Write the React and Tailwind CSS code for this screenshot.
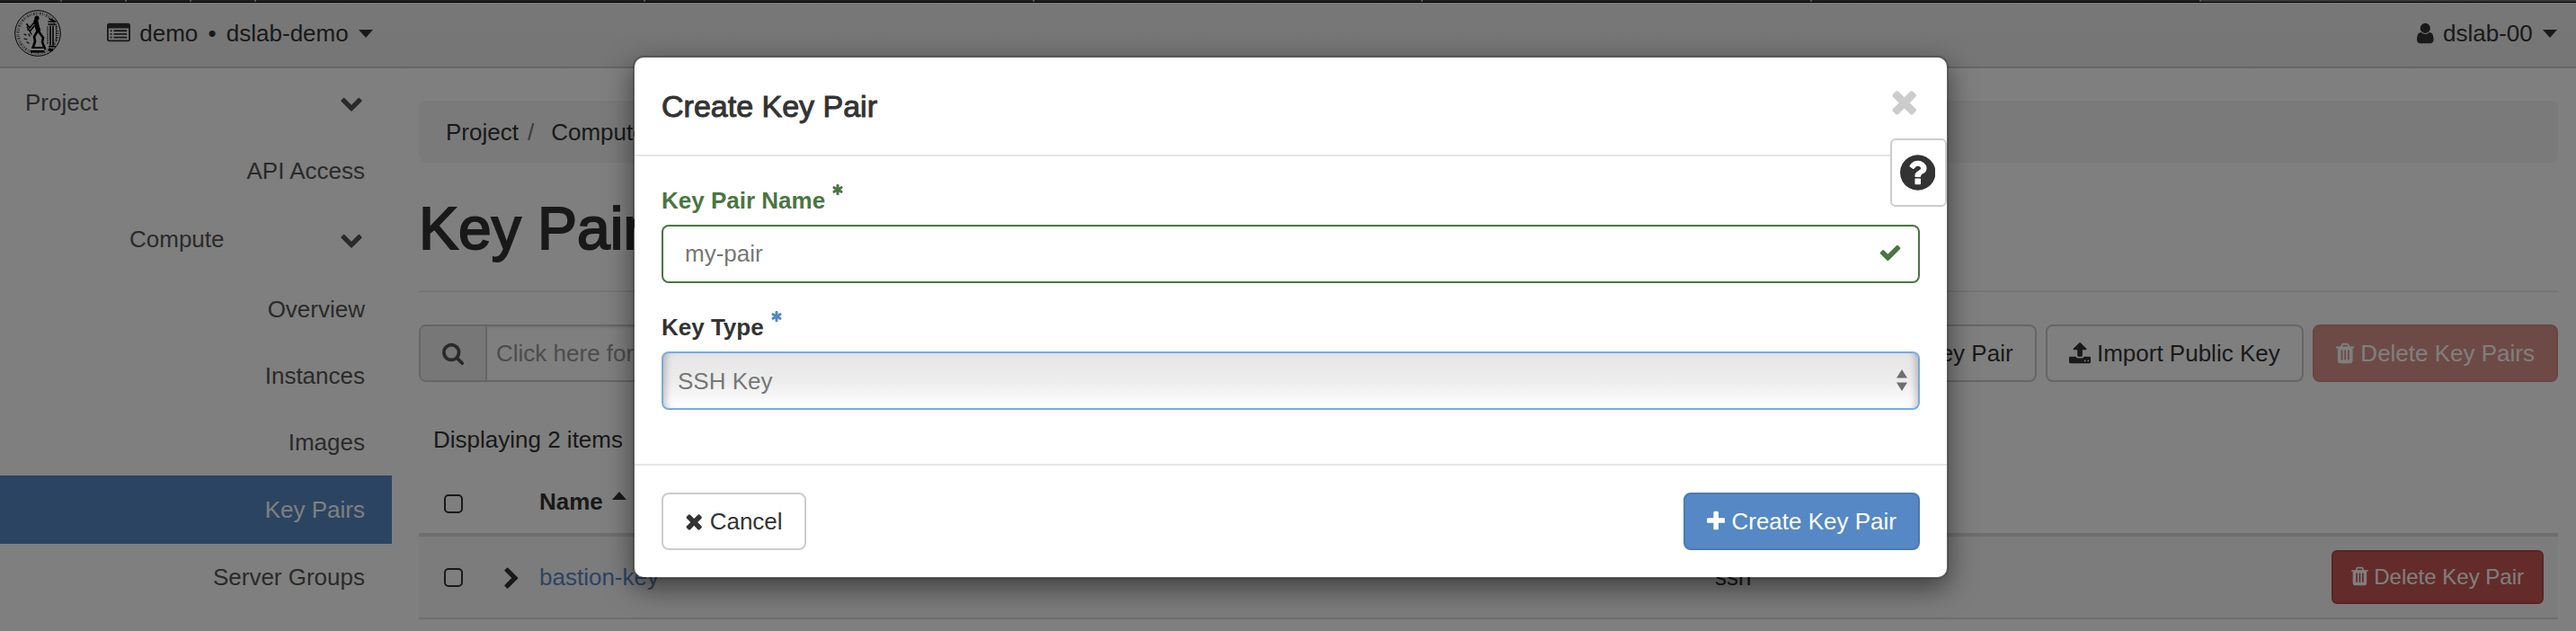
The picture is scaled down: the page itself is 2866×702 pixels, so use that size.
const PATHS = {
  times: [192, 1408, "M1490 1322q0 40-28 68l-136 136q-28 28-68 28t-68-28l-294-294-294 294q-28 28-68 28t-68-28l-136-136q-28-28-28-68t28-68l294-294-294-294q-28-28-28-68t28-68l136-136q28-28 68-28t68 28l294 294 294-294q28-28 68-28t68 28l136 136q28 28 28 68t-28 68l-294 294 294 294q28 28 28 68z"],
  plus: [192, 1408, "M1600 736v192q0 40-28 68t-68 28h-416v416q0 40-28 68t-68 28h-192q-40 0-68-28t-28-68v-416h-416q-40 0-68-28t-28-68v-192q0-40 28-68t68-28h416v-416q0-40 28-68t68-28h192q40 0 68 28t28 68v416h416q40 0 68 28t28 68z"],
  check: [0, 1792, "M1671 566q0 40-28 68l-724 724-136 136q-28 28-68 28t-68-28l-136-136-362-362q-28-28-28-68t28-68l136-136q28-28 68-28t68 28l294 295 656-657q28-28 68-28t68 28l136 136q28 28 28 68z"],
  chevronDown: [0, 1792, "M1683 808l-742 741q-19 19-45 19t-45-19l-742-741q-19-19-19-45.500t19-45.500l166-165q19-19 45-19t45 19l531 531 531-531q19-19 45-19t45 19l166 165q19 19 19 45.500t-19 45.500z"],
  chevronRight: [256, 1280, "M1363 877l-742 742q-19 19-45 19t-45-19l-166-166q-19-19-19-45t19-45l531-531-531-531q-19-19-19-45t19-45l166-166q19-19 45-19t45 19l742 742q19 19 19 45t-19 45z"],
  search: [64, 1664, "M1216 832q0-185-131.500-316.500t-316.500-131.500-316.500 131.500-131.500 316.500 131.500 316.500 316.500 131.500 316.500-131.500 131.500-316.500zm512 832q0 52-38 90t-90 38q-54 0-90-38l-343-342q-179 124-399 124-143 0-273.500-55.500t-225-150-150-225-55.500-273.500 55.500-273.500 150-225 225-150 273.500-55.500 273.500 55.500 225 150 150 225 55.500 273.500q0 220-124 399l343 343q37 37 37 90z"],
  user: [256, 1280, "M1536 1399q0 109-62.500 187t-150.500 78h-854q-88 0-150.500-78t-62.500-187q0-85 8.500-160.500t31.500-152 58.500-131 94-89 134.500-34.500q131 128 313 128t313-128q76 0 134.500 34.500t94 89 58.500 131 31.500 152 8.500 160.500zm-256-887q0 159-112.500 271.500t-271.500 112.500-271.500-112.500-112.500-271.500 112.500-271.500 271.500-112.500 271.500 112.500 112.500 271.500z"],
  question: [128, 1536, "M1024 1376v-192q0-14-9-23t-23-9h-192q-14 0-23 9t-9 23v192q0 14 9 23t23 9h192q14 0 23-9t9-23zm256-672q0-88-55.500-163t-138.500-116-170-41q-243 0-371 213-15 24 8 42l132 100q7 6 19 6 16 0 25-12 53-68 86-92 34-24 86-24 48 0 85.500 26t37.500 59q0 38-20 61t-68 45q-63 28-115.500 86.500t-52.500 125.500v36q0 14 9 23t23 9h192q14 0 23-9t9-23q0-19 21.500-49.500t54.500-49.500q32-18 49-28.500t46-35 44.500-48 28-60.500 12.500-81zm384 192q0 209-103 385.500t-279.500 279.500-385.500 103-385.500-103-279.500-279.500-103-385.500 103-385.500 279.500-279.500 385.500-103 385.500 103 279.500 279.500 103 385.500z"],
  upload: [64, 1664, "M1344 1472q0-26-19-45t-45-19-45 19-19 45 19 45 45 19 45-19 19-45zm256 0q0-26-19-45t-45-19-45 19-19 45 19 45 45 19 45-19 19-45zm128-224v320q0 40-28 68t-68 28h-1472q-40 0-68-28t-28-68v-320q0-40 28-68t68-28h427q21 56 70.500 92t110.500 36h256q61 0 110.500-36t70.500-92h427q40 0 68 28t28 68zm-325-648q-17 40-59 40h-256v448q0 26-19 45t-45 19h-256q-26 0-45-19t-19-45v-448h-256q-42 0-59-40-17-39 14-69l448-448q18-19 45-19t45 19l448 448q31 30 14 69z"],
  trash: [192, 1408, "M704 1376v-704q0-14-9-23t-23-9h-64q-14 0-23 9t-9 23v704q0 14 9 23t23 9h64q14 0 23-9t9-23zm256 0v-704q0-14-9-23t-23-9h-64q-14 0-23 9t-9 23v704q0 14 9 23t23 9h64q14 0 23-9t9-23zm256 0v-704q0-14-9-23t-23-9h-64q-14 0-23 9t-9 23v704q0 14 9 23t23 9h64q14 0 23-9t9-23zm-544-992h448l-48-117q-7-9-17-11h-317q-10 2-17 11zm928 32v64q0 14-9 23t-23 9h-96v948q0 83-47 143.500t-113 60.500h-832q-66 0-113-58.500t-47-141.500v-952h-96q-14 0-23-9t-9-23v-64q0-14 9-23t23-9h309l70-167q15-37 54-63t79-26h320q40 0 79 26t54 63l70 167h309q14 0 23 9t9 23z"],
  asterisk: [128, 1536, "M1546 1050q46 26 59.500 77.500t-12.500 97.500l-64 110q-26 46-77.500 59.500t-97.500-12.500l-266-153v307q0 52-38 90t-90 38h-128q-52 0-90-38t-38-90v-307l-266 153q-46 26-97.500 12.500t-77.500-59.500l-64-110q-26-46-12.500-97.500t59.500-77.500l266-154-266-154q-46-26-59.500-77.500t12.500-97.500l64-110q26-46 77.500-59.500t97.500 12.500l266 153v-307q0-52 38-90t90-38h128q52 0 90 38t38 90v307l266-153q46-26 97.500-12.500t77.500 59.500l64 110q26 46 12.500 97.500t-59.500 77.500l-266 154z"],
  listAlt: [0, 1792, "M384 1184v64q0 13-9.500 22.500t-22.500 9.500h-64q-13 0-22.500-9.500t-9.500-22.500v-64q0-13 9.500-22.500t22.500-9.500h64q13 0 22.500 9.500t9.500 22.500zm0-256v64q0 13-9.500 22.500t-22.500 9.500h-64q-13 0-22.500-9.500t-9.500-22.500v-64q0-13 9.500-22.500t22.500-9.500h64q13 0 22.500 9.500t9.500 22.500zm0-256v64q0 13-9.500 22.500t-22.500 9.500h-64q-13 0-22.500-9.500t-9.500-22.500v-64q0-13 9.500-22.500t22.500-9.500h64q13 0 22.500 9.500t9.500 22.500zm1152 512v64q0 13-9.500 22.500t-22.500 9.500h-960q-13 0-22.500-9.500t-9.500-22.500v-64q0-13 9.500-22.500t22.500-9.500h960q13 0 22.500 9.500t9.500 22.500zm0-256v64q0 13-9.500 22.500t-22.500 9.500h-960q-13 0-22.500-9.500t-9.500-22.500v-64q0-13 9.500-22.500t22.500-9.500h960q13 0 22.500 9.500t9.500 22.500zm0-256v64q0 13-9.500 22.500t-22.500 9.500h-960q-13 0-22.500-9.500t-9.500-22.500v-64q0-13 9.500-22.500t22.500-9.500h960q13 0 22.500 9.500t9.500 22.500zm128 704v-832q0-13-9.500-22.500t-22.500-9.500h-1472q-13 0-22.500 9.500t-9.500 22.500v832q0 13 9.500 22.500t22.500 9.500h1472q13 0 22.500-9.500t9.500-22.500zm128-1088v1088q0 66-47 113t-113 47h-1472q-66 0-113-47t-47-113v-1088q0-66 47-113t113-47h1472q66 0 113 47t47 113z"],
};

function Icon({ name, className = "h-[26px] align-[-4px]" }) {
  const [x, width, d] = PATHS[name];
  return (
    <svg viewBox={`${x} 0 ${width} 1792`} className={"inline-block shrink-0 " + className} fill="currentColor" aria-hidden="true">
      <path d={d} />
    </svg>
  );
}

function Caret({ up = false, className = "" }) {
  return (
    <svg viewBox="0 0 16 9" className={"inline-block h-[9px] w-4 " + className} fill="currentColor" aria-hidden="true">
      <path d={up ? "M0 9L8 0l8 9z" : "M0 0h16L8 9z"} />
    </svg>
  );
}

function Seal() {
  return (
    <svg viewBox="0 0 52 52" className="size-[52px]" role="img" aria-label="University seal">
      <circle cx="26" cy="26" r="25.300" fill="none" stroke="#000" strokeWidth="1" />
      <circle cx="26" cy="26" r="22" fill="none" stroke="#000" strokeWidth="3.200" strokeDasharray="1 1.200 .6 1.500 1.600 1.300" opacity=".6" />
      <g fill="none" stroke="#000" strokeLinecap="round" strokeLinejoin="round">
        <path d="M24 12.500l1 5 1.500 5" strokeWidth="5" />
        <path d="M26 23l-4 7 1 5-2 6M27 24l5 7-1 5 3 7" strokeWidth="2.600" />
        <path d="M22 14l-5 6-3-4M22 18l-4 5-3-1" strokeWidth="1.700" />
        <path d="M14 19l5 8" strokeWidth="1.300" />
        <path d="M38 13h8M39 10l5 2M38 16h7" strokeWidth="1.500" />
        <path d="M40 18v21M43 18v21" strokeWidth="1.600" />
        <path d="M37 19v19M46.500 18v17" strokeWidth="1" strokeDasharray="1 1.500" />
        <path d="M11 27l2 1M11 32l3 1M16 27l1 2M14 36l2 1" strokeWidth="1.200" />
      </g>
      <circle cx="25" cy="9" r="2.600" fill="#000" />
      <path d="M19 41h13v2H19zM18 45h15v2.500H18zM38 40h8v1.500h-8zM38 43h5v3h-5z" fill="#000" />
    </svg>
  );
}

const btn = "inline-block whitespace-nowrap rounded-lg border-2 px-6 text-[26px] leading-[60px]";

function Sidebar() {
  const items = ["Overview", "Instances", "Images", "Key Pairs", "Server Groups"];
  return (
    <nav className="w-[436px] shrink-0 text-[#555]">
      <button className="flex h-[76px] w-full items-center justify-between pr-8 pl-7">
        Project <Icon name="chevronDown" className="h-[26px]" />
      </button>
      <a href="#api" className="flex h-[76px] items-center justify-end pr-[30px]">API Access</a>
      <button className="flex h-[76px] w-full items-center justify-between pr-8 pl-36">
        Compute <Icon name="chevronDown" className="h-[26px]" />
      </button>
      <div className="pt-[3px]">
        {items.map((t) => (
          <a
            key={t}
            href="#item"
            className={
              "flex items-center justify-end pr-[30px] " +
              (t === "Key Pairs" ? "h-[76px] bg-[#5688c5] pb-px text-white" : "h-[74px] pb-px")
            }
          >
            {t}
          </a>
        ))}
      </div>
    </nav>
  );
}

function Check({ label }) {
  return (
    <input
      type="checkbox"
      aria-label={label}
      className="block size-[21px] appearance-none rounded-[5px] border-2 border-[#333] bg-white"
    />
  );
}

function Main() {
  return (
    <main className="min-w-0 grow pt-9 pr-5 pl-[30px]">
      <ol className="flex h-[69px] items-center rounded-lg bg-[#f5f5f5] px-[30px]">
        <li>Project</li>
        <li className="before:px-[10px] before:text-[#777] before:content-['/']"><span className="pl-[9px]">Compute</span></li>
        <li className="before:px-[10px] before:text-[#777] before:content-['/']"><span className="pl-[9px]">Key Pairs</span></li>
      </ol>
      <h1 className="mt-9 border-b-2 border-[#e8e8e8] pb-8 text-[66px] leading-[74px] [-webkit-text-stroke:2px_#333]">Key Pairs</h1>
      <div className="mt-9 flex items-start gap-[10px]">
        <div className="flex h-16 grow overflow-hidden rounded-lg border-2 border-[#ccc]">
          <span className="flex w-[74px] items-center justify-center border-r-2 border-[#ccc] bg-[#eee] text-[#555]">
            <Icon name="search" className="h-[26px]" />
          </span>
          <input
            aria-label="Filter"
            placeholder="Click here for filters or full text search."
            className="min-w-0 grow bg-white px-[10px] shadow-[inset_0_2px_2px_rgba(0,0,0,0.075)] placeholder:text-[#999]"
          />
        </div>
        <button className={btn + " border-[#ccc] bg-white"}><Icon name="plus" /> Create Key Pair</button>
        <button className={btn + " border-[#ccc] bg-white"}><Icon name="upload" /> Import Public Key</button>
        <button className={btn + " border-[#d68a82] bg-[#da948c] text-white"}><Icon name="trash" /> Delete Key Pairs</button>
      </div>
      <table className="mt-11 w-full border-collapse text-left">
        <caption className="px-4 pb-[18px] text-left leading-10">Displaying 2 items</caption>
        <thead>
          <tr className="h-[68px] border-b-4 border-[#ddd]">
            <th className="w-[94px] pl-7"><Check label="Select all" /></th>
            <th className="w-10"><span className="sr-only">Expand</span></th>
            <th className="w-[1308px] pb-1 font-bold">Name <Caret up className="ml-[3px] align-[11px]" /></th>
            <th className="pb-1 font-bold">Type</th>
            <th><span className="sr-only">Actions</span></th>
          </tr>
        </thead>
        <tbody>
          {["bastion-key", "dslab-key"].map((name, i) => (
            <tr key={name} className={"h-[93px] border-b-2 border-[#ddd] " + (i === 0 ? "bg-[#f9f9f9]" : "bg-white")}>
              <td className="pl-7"><Check label={"Select " + name} /></td>
              <td><button aria-label="Expand" className="block"><Icon name="chevronRight" className="block h-[26px]" /></button></td>
              <td><a href="#key" className="text-[#5588c5]">{name}</a></td>
              <td>ssh</td>
              <td className="pr-4 text-right">
                <button className="inline-block rounded-md border-2 border-[#b94640] bg-[#c75854] px-5 text-2xl leading-14 text-white">
                  <Icon name="trash" className="h-6 align-[-3px]" /> Delete Key Pair
                </button>
              </td>
            </tr>
          ))}
        </tbody>
      </table>
    </main>
  );
}

function Modal() {
  return (
    <div role="dialog" aria-labelledby="dialog-title" className="relative mx-auto w-[1464px] rounded-xl border-2 border-black/20 bg-white bg-clip-padding shadow-[0_10px_30px_rgba(0,0,0,0.5)]">
      <div className="flex h-[110px] items-center justify-between border-b-2 border-[#e5e5e5] pr-8 pl-[30px]">
        <h2 id="dialog-title" className="text-[34px] leading-10 [-webkit-text-stroke:1px_#333]">Create Key Pair</h2>
        <button aria-label="Close" className="pb-[10px] text-[#ccc]"><Icon name="times" className="block h-10" /></button>
      </div>
      <button aria-label="Help" className="absolute top-[90px] right-0 flex h-[76px] w-[63px] items-center justify-center rounded-md border-2 border-[#ccc] bg-white pr-[2px]">
        <Icon name="question" className="h-[46px]" />
      </button>
      <form className="px-[30px] pt-[30px] pb-[60px]">
        <label htmlFor="key-name" className="flex h-[46px] gap-2 font-bold leading-[38px] text-[#4a7641]">
          <span>Key Pair Name</span>
          <Icon name="asterisk" className="h-[14px]" />
        </label>
        <div className="relative">
          <input
            id="key-name"
            defaultValue="my-pair"
            className="block h-[65px] w-full rounded-lg border-2 border-[#4a7641] bg-white px-6 text-[#777] shadow-[inset_0_2px_2px_rgba(0,0,0,0.075)]"
          />
          <Icon name="check" className="absolute top-[18px] right-5 h-[26px] text-[#4a7641]" />
        </div>
        <label htmlFor="key-type" className="mt-[30px] flex h-[46px] gap-2 font-bold leading-[38px]">
          <span>Key Type</span>
          <Icon name="asterisk" className="h-[14px] text-[#5588c5]" />
        </label>
        <div className="relative">
          <select
            id="key-type"
            className="block h-[65px] w-full appearance-none rounded-lg border-2 border-[#76aae5] bg-linear-to-b from-[#e5e5e5] via-[#ededed] to-white px-4 text-[#777] shadow-[inset_9px_0_8px_-7px_rgba(0,0,0,0.25),inset_-9px_0_8px_-7px_rgba(0,0,0,0.25)]"
          >
            <option>SSH Key</option>
            <option>X509 Certificate</option>
          </select>
          <svg viewBox="0 0 12 24" className="pointer-events-none absolute top-[20px] right-[14px] h-6 w-3" fill="#6e6e6e" aria-hidden="true">
            <path d="M6 0l6 9.500H0zM6 24l6-9.500H0z" />
          </svg>
        </div>
      </form>
      <div className="flex justify-between border-t-2 border-[#e5e5e5] p-[30px]">
        <button className={btn + " border-[#ccc] bg-white"}><Icon name="times" /> Cancel</button>
        <button className={btn + " border-[#4a7ab8] bg-[#5588c5] text-white"}><Icon name="plus" /> Create Key Pair</button>
      </div>
    </div>
  );
}

export default function App() {
  return (
    <div className="relative h-screen overflow-hidden bg-white font-['Liberation_Sans',Arial,sans-serif] text-[26px] leading-9 text-[#333]">
      <header className="flex h-[76px] items-center justify-between border-b-2 border-[#ccc] bg-linear-to-b from-[#f0f0f0] to-[#ebebeb] pr-[21px] pl-4">
        <div className="flex items-center gap-[51px]">
          <Seal />
          <button>
            <Icon name="listAlt" /> <span className="pl-[3px]">demo</span> <span className="px-1">•</span> dslab-demo <Caret className="ml-1 align-[4px]" />
          </button>
        </div>
        <button>
          <Icon name="user" /> <span className="pl-[3px]">dslab-00</span> <Caret className="ml-1 align-[4px]" />
        </button>
      </header>
      <div className="flex">
        <Sidebar />
        <Main />
      </div>
      <div className="absolute inset-0 bg-black/50 pt-[62px] pl-[6px]">
        <Modal />
      </div>
      <div className="absolute inset-x-0 top-0 flex h-[3px] border-b border-black bg-[#1f1f1f]">
        <div className="flex w-[285px] justify-between pl-[67px]">
          <i className="w-[2px] bg-[#555]" /><i className="w-[2px] bg-[#555]" /><i className="w-[2px] bg-[#555]" /><i className="w-[2px] bg-[#555]" />
        </div>
        <div className="grid grow grid-cols-[repeat(5,433fr)_417fr] divide-x-2 divide-[#555]">
          <i /><i /><i /><i /><i /><i className="bg-[#363636]" />
        </div>
      </div>
    </div>
  );
}
